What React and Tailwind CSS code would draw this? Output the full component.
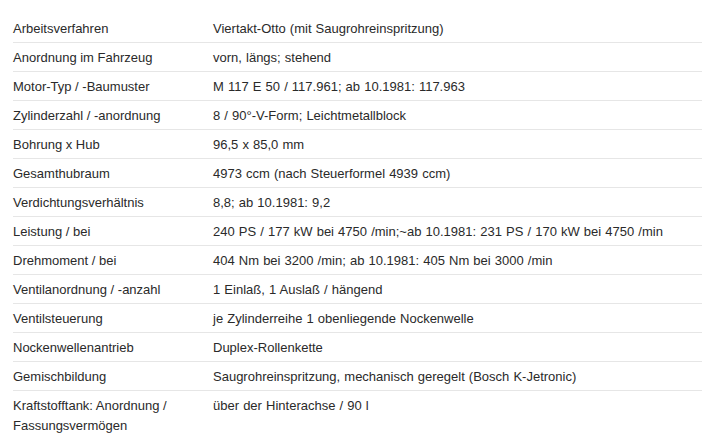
const specs = [
    ["Arbeitsverfahren", "Viertakt-Otto (mit Saugrohreinspritzung)"],
    ["Anordnung im Fahrzeug", "vorn, längs; stehend"],
    ["Motor-Typ / -Baumuster", "M 117 E 50 / 117.961; ab 10.1981: 117.963"],
    ["Zylinderzahl / -anordnung", "8 / 90°-V-Form; Leichtmetallblock"],
    ["Bohrung x Hub", "96,5 x 85,0 mm"],
    ["Gesamthubraum", "4973 ccm (nach Steuerformel 4939 ccm)"],
    ["Verdichtungsverhältnis", "8,8; ab 10.1981: 9,2"],
    ["Leistung / bei", "240 PS / 177 kW bei 4750 /min;~ab 10.1981: 231 PS / 170 kW bei 4750 /min"],
    ["Drehmoment / bei", "404 Nm bei 3200 /min; ab 10.1981: 405 Nm bei 3000 /min"],
    ["Ventilanordnung / -anzahl", "1 Einlaß, 1 Auslaß / hängend"],
    ["Ventilsteuerung", "je Zylinderreihe 1 obenliegende Nockenwelle"],
    ["Nockenwellenantrieb", "Duplex-Rollenkette"],
    ["Gemischbildung", "Saugrohreinspritzung, mechanisch geregelt (Bosch K-Jetronic)"],
    ["Kraftstofftank: Anordnung / Fassungsvermögen", "über der Hinterachse / 90 l"],
];

const App = () => {
    return (
        <div className="min-h-screen bg-white pt-[14px] pl-[13px] font-['Liberation_Sans',Arial,sans-serif] text-[13px] leading-[20px] text-[#2a2a2a]">
            <table className="w-full border-collapse">
                <tbody>
                    {specs.map(([label, value], i) => (
                        <tr
                            key={label}
                            className={i < specs.length - 1 ? "border-b border-[#e6e6e6]" : ""}
                        >
                            <td className="w-[200px] pt-[5px] pb-[3px] pr-4 align-top">{label}</td>
                            <td className="pt-[5px] pb-[3px] align-top [word-spacing:0.5px]">{value}</td>
                        </tr>
                    ))}
                </tbody>
            </table>
        </div>
    );
};

export default App;
